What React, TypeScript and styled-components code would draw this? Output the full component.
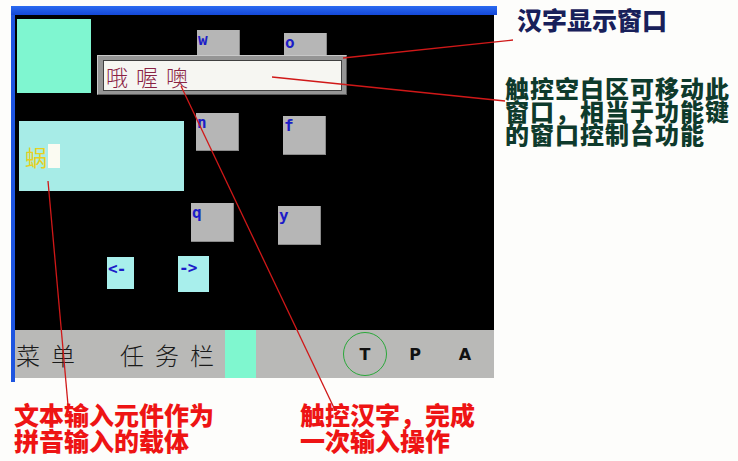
import React from "react";
import styled, { createGlobalStyle } from "styled-components";

const Global = createGlobalStyle`
  html, body { margin: 0; padding: 0; background: #ffffff; }
  body { width: 738px; height: 461px; overflow: hidden; }
`;

const CJK = `"Noto Sans CJK SC", "Noto Sans", sans-serif`;

const Page = styled.div`
  position: relative;
  width: 738px;
  height: 461px;
  background: #fdfdfb;
  display: flex;
  flex-direction: column;
`;

const TopRow = styled.div`
  display: flex;
  align-items: flex-start;
`;

const Device = styled.div`
  margin: 6px 0 0 11px;
  width: 486px;
  display: flex;
  flex-direction: column;
`;

const TitleBar = styled.div`
  height: 9px;
  background: linear-gradient(#2a6af0, #1448d8);
`;

const DeviceBody = styled.div`
  display: flex;
  border-left: 4px solid #1e55e0;
  padding-bottom: 4px;
  width: 479px;
`;

const Screen = styled.div`
  width: 479px;
  display: flex;
  flex-direction: column;
`;

const Desktop = styled.div`
  position: relative;
  height: 315px;
  background: #000000;
  overflow: hidden;
`;

const Tile = styled.div<{ x: number; y: number; w: number; h: number; bg: string }>`
  position: absolute;
  left: ${(p) => p.x}px;
  top: ${(p) => p.y}px;
  width: ${(p) => p.w}px;
  height: ${(p) => p.h}px;
  background: ${(p) => p.bg};
`;

const Key = styled.div<{ x: number; y: number; w: number; h: number; light?: boolean }>`
  position: absolute;
  left: ${(p) => p.x}px;
  top: ${(p) => p.y}px;
  width: ${(p) => p.w}px;
  height: ${(p) => p.h}px;
  box-sizing: border-box;
  background: ${(p) => (p.light ? "#a8efec" : "#b6b6b6")};
  border-right: ${(p) => (p.light ? "none" : "1px solid #8a8a8a")};
  border-bottom: ${(p) => (p.light ? "none" : "1px solid #8a8a8a")};
  color: #1c1cc8;
  font-family: "DejaVu Sans Mono", monospace;
  font-weight: bold;
  font-size: 16px;
  line-height: 16px;
  padding: ${(p) => (p.light ? "4px 0 0 1px" : "2px 0 0 1px")};
  letter-spacing: -1px;
`;

const HanziWindow = styled.div`
  position: absolute;
  left: 82px;
  top: 40px;
  width: 250px;
  height: 40px;
  box-sizing: border-box;
  background: #959595;
  border: 1px solid #5a5a5a;
  border-top-color: #c8c8c8;
  border-left-color: #c8c8c8;
  padding: 4px 4px 3px 5px;
  display: flex;
`;

const HanziInner = styled.div`
  flex: 1;
  background: #f6f6f2;
  border: 1px solid #404040;
  display: flex;
  align-items: center;
  padding-left: 2px;
  gap: 8px;
  font-family: ${CJK};
  font-weight: 300;
  font-size: 22px;
  color: #8a2244;
`;

const InputBox = styled.div`
  position: absolute;
  left: 4px;
  top: 106px;
  width: 165px;
  height: 70px;
  background: #a7ece7;
  display: flex;
  align-items: center;
  padding-left: 6px;
  box-sizing: border-box;
`;

const Pinyin = styled.span`
  font-family: ${CJK};
  font-size: 22px;
  color: #e8d020;
  line-height: 26px;
`;

const Caret = styled.span`
  width: 12px;
  height: 24px;
  background: #fbfbf2;
  margin-left: 1px;
`;

const Taskbar = styled.div`
  height: 48px;
  background: #b9b9b7;
  display: flex;
  align-items: center;
`;

const TaskText = styled.span<{ pad: number }>`
  font-family: ${CJK};
  font-weight: 300;
  font-size: 24px;
  letter-spacing: 11px;
  color: #1a1a1a;
  margin-left: ${(p) => p.pad}px;
`;

const TaskBlock = styled.div`
  align-self: stretch;
  width: 31px;
  background: #7ff7cf;
`;

const Tray = styled.div`
  margin-left: auto;
  display: flex;
  align-items: center;
  width: 151px;
`;

const TrayItem = styled.div<{ ring?: boolean }>`
  width: 44px;
  height: 44px;
  box-sizing: border-box;
  border-radius: 50%;
  border: ${(p) => (p.ring ? "1px solid #2aa83a" : "1px solid transparent")};
  display: flex;
  align-items: center;
  justify-content: center;
  margin-right: 6px;
  font-family: "DejaVu Sans", sans-serif;
  font-weight: bold;
  font-size: 16px;
  color: #111;
`;

const Notes = styled.div`
  display: flex;
  flex-direction: column;
  margin-left: 8px;
`;

const NoteTitle = styled.div`
  font-family: ${CJK};
  font-weight: 900;
  font-size: 25px;
  line-height: 28px;
  color: #18205a;
  margin: 5px 0 0 12px;
`;

const NoteBody = styled.div`
  font-family: ${CJK};
  font-weight: 800;
  font-size: 24px;
  letter-spacing: 1px;
  line-height: 23px;
  color: #0e3a2c;
  margin-top: 43px;
  white-space: pre-line;
`;

const BottomRow = styled.div`
  display: flex;
  margin-top: 19px;
`;

const RedNote = styled.div<{ left: number }>`
  font-family: ${CJK};
  font-weight: 900;
  font-size: 25px;
  line-height: 26px;
  color: #ee1414;
  margin-left: ${(p) => p.left}px;
  white-space: pre-line;
`;

const Overlay = styled.svg`
  position: absolute;
  left: 0;
  top: 0;
  pointer-events: none;
`;

export default function App() {
  return (
    <Page>
      <Global />
      <TopRow>
        <Device>
          <TitleBar />
          <DeviceBody>
            <Screen>
              <Desktop>
                <Tile x={2} y={4} w={74} h={74} bg="#7ff6d0" />
                <Key x={182} y={15} w={43} h={40}>w</Key>
                <Key x={269} y={18} w={43} h={38}>o</Key>
                <HanziWindow>
                  <HanziInner>
                    <span>哦</span>
                    <span>喔</span>
                    <span>噢</span>
                  </HanziInner>
                </HanziWindow>
                <Key x={181} y={98} w={43} h={38}>n</Key>
                <Key x={268} y={101} w={43} h={39}>f</Key>
                <InputBox>
                  <Pinyin>蜗</Pinyin>
                  <Caret />
                </InputBox>
                <Key x={176} y={188} w={43} h={39}>q</Key>
                <Key x={263} y={191} w={43} h={39}>y</Key>
                <Key x={92} y={242} w={27} h={32} light>&lt;-</Key>
                <Key x={163} y={241} w={31} h={36} light>-&gt;</Key>
              </Desktop>
              <Taskbar>
                <TaskText pad={1}>菜单</TaskText>
                <TaskText pad={34}>任务栏</TaskText>
                <TaskBlock />
                <Tray>
                  <TrayItem ring>T</TrayItem>
                  <TrayItem>P</TrayItem>
                  <TrayItem>A</TrayItem>
                </Tray>
              </Taskbar>
            </Screen>
          </DeviceBody>
        </Device>
        <Notes>
          <NoteTitle>汉字显示窗口</NoteTitle>
          <NoteBody>{"触控空白区可移动此\n窗口，相当于功能键\n的窗口控制台功能"}</NoteBody>
        </Notes>
      </TopRow>
      <BottomRow>
        <RedNote left={14}>{"文本输入元件作为\n拼音输入的载体"}</RedNote>
        <RedNote left={86}>{"触控汉字，完成\n一次输入操作"}</RedNote>
      </BottomRow>
      <Overlay width={738} height={461} viewBox="0 0 738 461">
        <g stroke="#d01818" strokeWidth={1.3} fill="none">
          <line x1={513} y1={40} x2={343} y2={58} />
          <line x1={505} y1={101} x2={272} y2={77} />
          <line x1={181} y1={86} x2={335} y2={410} />
          <line x1={48} y1={181} x2={68} y2={405} />
        </g>
      </Overlay>
    </Page>
  );
}
